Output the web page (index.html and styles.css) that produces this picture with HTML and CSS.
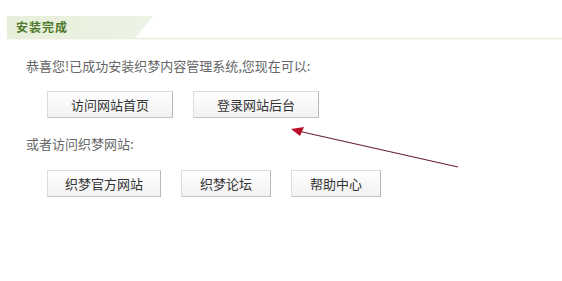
FILE: index.html
```html
<!DOCTYPE html>
<html lang="zh-CN">
<head>
  <meta charset="UTF-8">
  <title>安装完成</title>
  <link rel="stylesheet" href="styles.css">
</head>
<body>
  <div class="title-bar">
    <div class="tab">安装完成</div>
  </div>

  <div class="content">
    <p class="line">恭喜您!已成功安装织梦内容管理系统,您现在可以:</p>
    <div class="btns">
      <button class="btn w125">访问网站首页</button>
      <button class="btn w125">登录网站后台</button>
    </div>

    <p class="line">或者访问织梦网站:</p>
    <div class="btns small">
      <button class="btn w113">织梦官方网站</button>
      <button class="btn w90">织梦论坛</button>
      <button class="btn w90">帮助中心</button>
    </div>
  </div>

  <!-- pointer to the admin button -->
  <svg class="arrow" width="180" height="50" viewBox="0 0 180 50">
    <line x1="172" y1="44" x2="12" y2="8" stroke="#6b2030" stroke-width="1.2"/>
    <polygon points="5,6 18,4 14,13" fill="#b8102a"/>
  </svg>
</body>
</html>
```

FILE: styles.css
```css
body {
  position: relative;
  margin: 0;
  background: #fff;
  font-family: "Noto Sans CJK SC", "Liberation Sans", sans-serif;
  color: #555;
}

/* Title tab */
.title-bar {
  padding-top: 16px;
  margin-left: 7px;
  border-bottom: 1px solid #e9eedf;
  box-shadow: 0 1px 0 #f6f8f1;
}

.tab {
  position: relative;
  width: 128px;
  height: 22px;
  line-height: 22px;
  padding-left: 9px;
  box-sizing: border-box;
  background: linear-gradient(to right, #e6efd9, #edf3e4);
  color: #4f7a2c;
  font-size: 12px;
  font-weight: bold;
  letter-spacing: 1px;
}

.tab::after {
  content: "";
  position: absolute;
  top: 0;
  right: -18px;
  width: 18px;
  height: 22px;
  background: linear-gradient(to bottom right, #edf3e4 50%, transparent 51%);
}

/* Content */
.content {
  padding-left: 26px;
}

.line {
  margin: 0;
  font-size: 13px;
  color: #666;
  line-height: 20px;
}

.content .line:first-child {
  margin-top: 17px;
}

.btns {
  display: flex;
  gap: 20px;
  margin: 15px 0 16px 21px;
}

.btns.small {
  margin-top: 16px;
}

.btn {
  height: 27px;
  padding: 0;
  border: 1px solid #dcdcdc;
  border-right-color: #b8b8b8;
  border-bottom-color: #c4c4c4;
  background: linear-gradient(to bottom, #ffffff, #f1f1f1);
  font-family: "Noto Sans CJK SC", sans-serif;
  font-size: 13px;
  color: #333;
}

.w125 { width: 126px; }
.w113 { width: 114px; }
.w90 { width: 90px; }

.arrow {
  position: absolute;
  left: 286px;
  top: 123px;
}
```
